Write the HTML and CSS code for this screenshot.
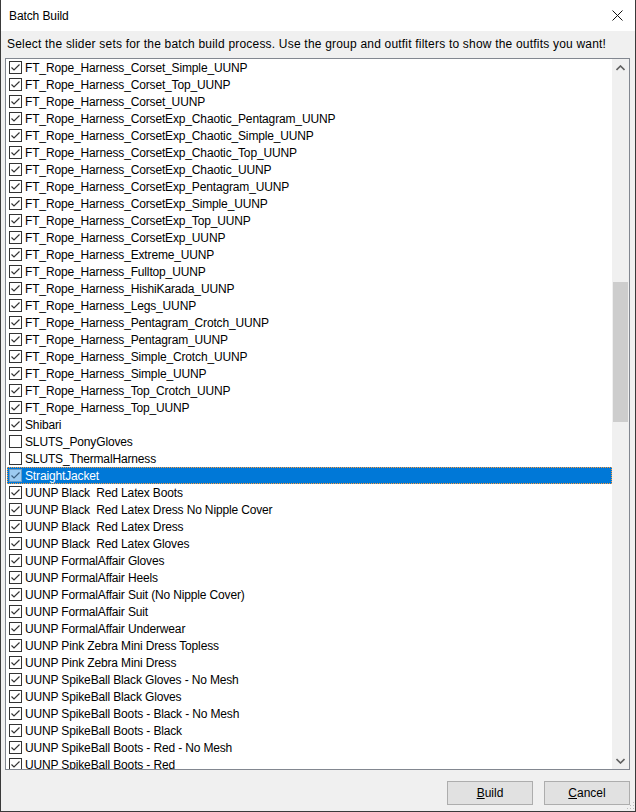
FILE: index.html
```html
<html>

<head>
  <link rel="stylesheet" href="styles.css">
</head>

<body>
  <div id="window">
    <div id="titlebar">
      <span id="title">Batch Build</span>
      <span id="closeBtn">
        <svg width="11" height="11" viewBox="0 0 11 11">
          <path d="M0.5 0.5 L10.5 10.5 M10.5 0.5 L0.5 10.5" stroke="#111" stroke-width="1" fill="none" />
        </svg>
      </span>
    </div>

    <div id="dialog">
      <div id="hint">Select the slider sets for the batch build process. Use the group and outfit filters to show the outfits you want!</div>

      <div id="listBox">
        <ul id="setList"></ul>
        <div class="scrollbar">
          <div class="scrollArrow">
            <svg width="9" height="6" viewBox="0 0 9 6"><path d="M0.5 5 L4.5 1 L8.5 5" stroke="#606060" stroke-width="1.6" fill="none" /></svg>
          </div>
          <div class="scrollTrack">
            <div class="scrollThumb"></div>
          </div>
          <div class="scrollArrow">
            <svg width="9" height="6" viewBox="0 0 9 6"><path d="M0.5 1 L4.5 5 L8.5 1" stroke="#606060" stroke-width="1.6" fill="none" /></svg>
          </div>
        </div>
      </div>

      <div id="btnRow">
        <a href="#" class="dlgBtn"><u>B</u>uild</a>
        <a href="#" class="dlgBtn"><u>C</u>ancel</a>
      </div>
      <div id="sizeGrip">
        <svg width="9" height="9" viewBox="0 0 9 9">
          <rect x="7" y="1" width="1" height="1" fill="#bcbcbc" />
          <rect x="4" y="4" width="1" height="1" fill="#bcbcbc" />
          <rect x="7" y="4" width="1" height="1" fill="#bcbcbc" />
          <rect x="1" y="7" width="1" height="1" fill="#bcbcbc" />
          <rect x="4" y="7" width="1" height="1" fill="#bcbcbc" />
          <rect x="7" y="7" width="1" height="1" fill="#bcbcbc" />
        </svg>
      </div>
    </div>
  </div>

  <script>
    const sets = [
      "FT_Rope_Harness_Corset_Simple_UUNP",
      "FT_Rope_Harness_Corset_Top_UUNP",
      "FT_Rope_Harness_Corset_UUNP",
      "FT_Rope_Harness_CorsetExp_Chaotic_Pentagram_UUNP",
      "FT_Rope_Harness_CorsetExp_Chaotic_Simple_UUNP",
      "FT_Rope_Harness_CorsetExp_Chaotic_Top_UUNP",
      "FT_Rope_Harness_CorsetExp_Chaotic_UUNP",
      "FT_Rope_Harness_CorsetExp_Pentagram_UUNP",
      "FT_Rope_Harness_CorsetExp_Simple_UUNP",
      "FT_Rope_Harness_CorsetExp_Top_UUNP",
      "FT_Rope_Harness_CorsetExp_UUNP",
      "FT_Rope_Harness_Extreme_UUNP",
      "FT_Rope_Harness_Fulltop_UUNP",
      "FT_Rope_Harness_HishiKarada_UUNP",
      "FT_Rope_Harness_Legs_UUNP",
      "FT_Rope_Harness_Pentagram_Crotch_UUNP",
      "FT_Rope_Harness_Pentagram_UUNP",
      "FT_Rope_Harness_Simple_Crotch_UUNP",
      "FT_Rope_Harness_Simple_UUNP",
      "FT_Rope_Harness_Top_Crotch_UUNP",
      "FT_Rope_Harness_Top_UUNP",
      "Shibari",
      "SLUTS_PonyGloves",
      "SLUTS_ThermalHarness",
      "StraightJacket",
      "UUNP Black  Red Latex Boots",
      "UUNP Black  Red Latex Dress No Nipple Cover",
      "UUNP Black  Red Latex Dress",
      "UUNP Black  Red Latex Gloves",
      "UUNP FormalAffair Gloves",
      "UUNP FormalAffair Heels",
      "UUNP FormalAffair Suit (No Nipple Cover)",
      "UUNP FormalAffair Suit",
      "UUNP FormalAffair Underwear",
      "UUNP Pink Zebra Mini Dress Topless",
      "UUNP Pink Zebra Mini Dress",
      "UUNP SpikeBall Black Gloves - No Mesh",
      "UUNP SpikeBall Black Gloves",
      "UUNP SpikeBall Boots - Black - No Mesh",
      "UUNP SpikeBall Boots - Black",
      "UUNP SpikeBall Boots - Red - No Mesh",
      "UUNP SpikeBall Boots - Red"
    ]
    const unchecked = ["SLUTS_PonyGloves", "SLUTS_ThermalHarness"]
    const selected = "StraightJacket"

    const checkSvg = '<svg width="13" height="13" viewBox="0 0 13 13">' +
      '<rect class="boxRect" x="0.5" y="0.5" width="12" height="12" />' +
      '<path class="tick" d="M2.5 6.5 L5 9 L10.5 3.5" fill="none" stroke-width="1.2" />' +
      '</svg>'
    const emptySvg = '<svg width="13" height="13" viewBox="0 0 13 13">' +
      '<rect class="boxRect" x="0.5" y="0.5" width="12" height="12" />' +
      '</svg>'

    const list = document.querySelector('#setList')
    sets.forEach(name => {
      const li = document.createElement('li')
      li.className = 'setItem'
      if (name === selected) li.classList.add('selected')
      const box = unchecked.includes(name) ? emptySvg : checkSvg
      li.innerHTML = '<span class="checkBox">' + box + '</span><span class="setName"></span>'
      li.querySelector('.setName').textContent = name
      list.appendChild(li)
    })
  </script>
</body>

</html>
```

FILE: styles.css
```css
body {
  margin: 0;
  font-family: "Liberation Sans", Arial, sans-serif;
  font-size: 12px;
  color: #000000;
}

#window {
  width: 634px;
  height: 811px;
  border: 1px solid #3a3a3a;
  border-top: none;
  background: #f0f0f0;
  display: flex;
  flex-direction: column;
}

#titlebar {
  height: 31px;
  background: #ffffff;
  display: flex;
  align-items: center;
  justify-content: space-between;
  padding: 0 12px 0 8px;
}

#title {
  font-size: 12px;
  letter-spacing: -0.1px;
}

#closeBtn {
  display: flex;
  height: 11px;
}

#dialog {
  flex: 1;
  display: flex;
  flex-direction: column;
  padding: 0 5px 0 4px;
  position: relative;
}

#hint {
  height: 27px;
  line-height: 26px;
  padding-left: 2px;
  letter-spacing: 0.2px;
  white-space: nowrap;
}

#listBox {
  height: 710px;
  border: 1px solid #828790;
  background: #ffffff;
  display: flex;
}

#setList {
  flex: 1;
  margin: 0;
  padding: 0;
  list-style: none;
  overflow: hidden;
}

.setItem {
  height: 17px;
  display: flex;
  align-items: center;
  padding-left: 3px;
  white-space: pre;
}

.setItem.selected {
  background: #0078d7;
  color: #ffffff;
  outline: 1px dotted #ff9b3b;
  outline-offset: -1px;
  margin-left: 1px;
  padding-left: 2px;
}

.checkBox {
  display: flex;
  width: 13px;
  height: 13px;
  margin-right: 3px;
}

.boxRect {
  fill: #ffffff;
  stroke: #333333;
  stroke-width: 1;
}

.tick {
  stroke: #333333;
}

.selected .boxRect {
  fill: #9ccaf0;
  stroke: #6e9cc4;
}

.selected .tick {
  stroke: #3a5f80;
}

.setName {
  letter-spacing: -0.15px;
  padding-top: 1px;
}

.scrollbar {
  width: 17px;
  background: #f0f0f0;
  display: flex;
  flex-direction: column;
}

.scrollArrow {
  height: 17px;
  display: flex;
  align-items: center;
  justify-content: center;
}

.scrollTrack {
  flex: 1;
  padding: 206px 1px 0 1px;
}

.scrollThumb {
  height: 140px;
  background: #cdcdcd;
}

#btnRow {
  display: flex;
  justify-content: flex-end;
  gap: 11px;
  padding-top: 11px;
}

.dlgBtn {
  width: 84px;
  height: 22px;
  line-height: 22px;
  text-align: center;
  background: #e1e1e1;
  border: 1px solid #adadad;
  color: #000000;
  text-decoration: none;
  font-size: 12px;
}

.dlgBtn u {
  text-decoration: underline;
  text-underline-offset: 1px;
}

#sizeGrip {
  position: absolute;
  right: 0;
  bottom: 1px;
  display: flex;
}
```
